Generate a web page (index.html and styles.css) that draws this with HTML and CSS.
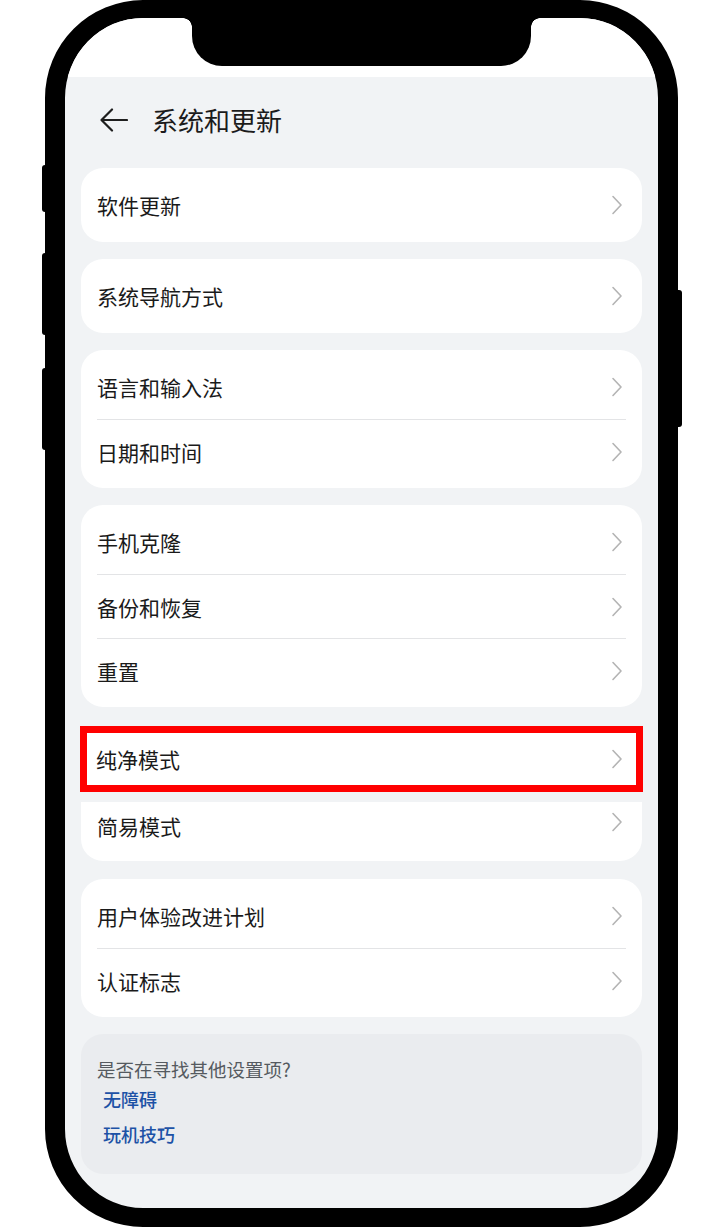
FILE: index.html
```html
<!DOCTYPE html>
<html lang="zh-CN">
<head>
    <meta charset="UTF-8">
    <meta name="viewport" content="width=device-width, initial-scale=1.0">
    <title>系统和更新</title>
    <link rel="stylesheet" href="styles.css">
</head>
<body>
    <div class="device">
        <span class="side-btn btn-silent"></span>
        <span class="side-btn btn-vol-up"></span>
        <span class="side-btn btn-vol-down"></span>
        <span class="side-btn btn-power"></span>

        <div class="phone">
            <div class="status-bar">
                <div class="notch"></div>
            </div>

            <div class="header">
                <svg class="back" width="28" height="24" viewBox="0 0 28 24">
                    <path d="M12 1.5 L1.5 12 L12 22.5 M1.5 12 H27" fill="none" stroke="#1e1e1e" stroke-width="2.2" stroke-linecap="round" stroke-linejoin="round"/>
                </svg>
                <h1>系统和更新</h1>
            </div>

            <div class="list">
                <div class="card">
                    <div class="row"><span>软件更新</span><svg class="chevron" width="12" height="20" viewBox="0 0 12 20"><path d="M2 1.5 L10 10 L2 18.5" fill="none" stroke="#b4b4b4" stroke-width="1.6" stroke-linecap="round" stroke-linejoin="round"/></svg></div>
                </div>

                <div class="card">
                    <div class="row"><span>系统导航方式</span><svg class="chevron" width="12" height="20" viewBox="0 0 12 20"><path d="M2 1.5 L10 10 L2 18.5" fill="none" stroke="#b4b4b4" stroke-width="1.6" stroke-linecap="round" stroke-linejoin="round"/></svg></div>
                </div>

                <div class="card">
                    <div class="row"><span>语言和输入法</span><svg class="chevron" width="12" height="20" viewBox="0 0 12 20"><path d="M2 1.5 L10 10 L2 18.5" fill="none" stroke="#b4b4b4" stroke-width="1.6" stroke-linecap="round" stroke-linejoin="round"/></svg></div>
                    <div class="row"><span>日期和时间</span><svg class="chevron" width="12" height="20" viewBox="0 0 12 20"><path d="M2 1.5 L10 10 L2 18.5" fill="none" stroke="#b4b4b4" stroke-width="1.6" stroke-linecap="round" stroke-linejoin="round"/></svg></div>
                </div>

                <div class="card">
                    <div class="row"><span>手机克隆</span><svg class="chevron" width="12" height="20" viewBox="0 0 12 20"><path d="M2 1.5 L10 10 L2 18.5" fill="none" stroke="#b4b4b4" stroke-width="1.6" stroke-linecap="round" stroke-linejoin="round"/></svg></div>
                    <div class="row"><span>备份和恢复</span><svg class="chevron" width="12" height="20" viewBox="0 0 12 20"><path d="M2 1.5 L10 10 L2 18.5" fill="none" stroke="#b4b4b4" stroke-width="1.6" stroke-linecap="round" stroke-linejoin="round"/></svg></div>
                    <div class="row"><span>重置</span><svg class="chevron" width="12" height="20" viewBox="0 0 12 20"><path d="M2 1.5 L10 10 L2 18.5" fill="none" stroke="#b4b4b4" stroke-width="1.6" stroke-linecap="round" stroke-linejoin="round"/></svg></div>
                </div>

                <!-- bloco com o item destacado em vermelho -->
                <div class="card-split">
                    <div class="highlight">
                        <span>纯净模式</span><svg class="chevron" width="12" height="20" viewBox="0 0 12 20"><path d="M2 1.5 L10 10 L2 18.5" fill="none" stroke="#b4b4b4" stroke-width="1.6" stroke-linecap="round" stroke-linejoin="round"/></svg>
                    </div>
                    <div class="card-tail">
                        <span>简易模式</span><svg class="chevron" width="12" height="20" viewBox="0 0 12 20"><path d="M2 1.5 L10 10 L2 18.5" fill="none" stroke="#b4b4b4" stroke-width="1.6" stroke-linecap="round" stroke-linejoin="round"/></svg>
                    </div>
                </div>

                <div class="card">
                    <div class="row"><span>用户体验改进计划</span><svg class="chevron" width="12" height="20" viewBox="0 0 12 20"><path d="M2 1.5 L10 10 L2 18.5" fill="none" stroke="#b4b4b4" stroke-width="1.6" stroke-linecap="round" stroke-linejoin="round"/></svg></div>
                    <div class="row"><span>认证标志</span><svg class="chevron" width="12" height="20" viewBox="0 0 12 20"><path d="M2 1.5 L10 10 L2 18.5" fill="none" stroke="#b4b4b4" stroke-width="1.6" stroke-linecap="round" stroke-linejoin="round"/></svg></div>
                </div>

                <div class="suggest">
                    <p class="suggest-title">是否在寻找其他设置项?</p>
                    <a class="suggest-link">无障碍</a>
                    <a class="suggest-link">玩机技巧</a>
                </div>
            </div>
        </div>
    </div>
</body>
</html>
```

FILE: styles.css
```css
* {
    box-sizing: border-box;
}

body {
    margin: 0;
    padding: 0;
    background-color: #fff;
    font-family: "Noto Sans CJK SC", "Noto Sans", sans-serif;
    color: #1a1a1a;
}

.device {
    position: relative;
    width: 633px;
    height: 1228px;
    margin: 0 auto;
}

.side-btn {
    position: absolute;
    width: 8px;
    background-color: #000;
    border-radius: 3px;
}

.btn-silent {
    left: -3px;
    top: 165px;
    height: 47px;
}

.btn-vol-up {
    left: -3px;
    top: 253px;
    height: 82px;
}

.btn-vol-down {
    left: -3px;
    top: 368px;
    height: 82px;
}

.btn-power {
    right: -4px;
    top: 290px;
    height: 137px;
}

.phone {
    position: relative;
    height: 1227px;
    border-style: solid;
    border-color: #000;
    border-width: 18px 20px 19px 20px;
    border-radius: 98px;
    background-color: #f1f3f5;
    overflow: hidden;
    display: flex;
    flex-direction: column;
}

.status-bar {
    height: 59px;
    background-color: #fff;
    display: flex;
    justify-content: center;
}

.notch {
    position: relative;
    width: 339px;
    height: 48px;
    background-color: #000;
    border-radius: 0 0 30px 30px;
}

.notch::before,
.notch::after {
    content: "";
    position: absolute;
    top: 0;
    width: 9px;
    height: 9px;
}

.notch::before {
    left: -9px;
    background: radial-gradient(circle at 0 100%, transparent 8.5px, #000 9px);
}

.notch::after {
    right: -9px;
    background: radial-gradient(circle at 100% 100%, transparent 8.5px, #000 9px);
}

.header {
    height: 86px;
    display: flex;
    align-items: center;
    padding-left: 35px;
}

.back {
    display: block;
}

.header h1 {
    margin: 0 0 0 24px;
    font-size: 26px;
    font-weight: 400;
    line-height: 34px;
    color: #1b1b1b;
}

.list {
    display: flex;
    flex-direction: column;
    gap: 17px;
    padding: 5px 16px 0 16px;
}

.card {
    background-color: #fff;
    border-radius: 22px;
    padding: 5px 0;
}

.row {
    height: 64px;
    margin: 0 16px;
    display: flex;
    align-items: center;
    justify-content: space-between;
    font-size: 21px;
    line-height: 28px;
}

.row + .row {
    border-top: 1px solid #e3e4e6;
}

.chevron {
    display: block;
    margin-right: 3px;
}

.card-split {
    margin-top: 2px;
}

.highlight {
    height: 66px;
    margin: 0 -1px;
    border: 7px solid #ff0000;
    background-color: #fff;
    display: flex;
    align-items: center;
    justify-content: space-between;
    padding: 0 10px 0 9px;
    font-size: 21px;
    line-height: 28px;
}

.card-tail {
    height: 59px;
    margin-top: 10px;
    margin-bottom: 1px;
    background-color: #fff;
    border-radius: 0 0 22px 22px;
    display: flex;
    align-items: flex-start;
    justify-content: space-between;
    padding: 10px 16px 0 16px;
    font-size: 21px;
    line-height: 28px;
}

.suggest {
    background-color: #eaecef;
    border-radius: 22px;
    height: 140px;
    padding: 22px 16px 0 16px;
}

.suggest-title {
    margin: 0;
    font-size: 18.5px;
    line-height: 26px;
    color: #555a60;
}

.suggest-link {
    display: block;
    padding-left: 6px;
    font-size: 18px;
    font-weight: 500;
    line-height: 35px;
    color: #1d52a6;
}
```
